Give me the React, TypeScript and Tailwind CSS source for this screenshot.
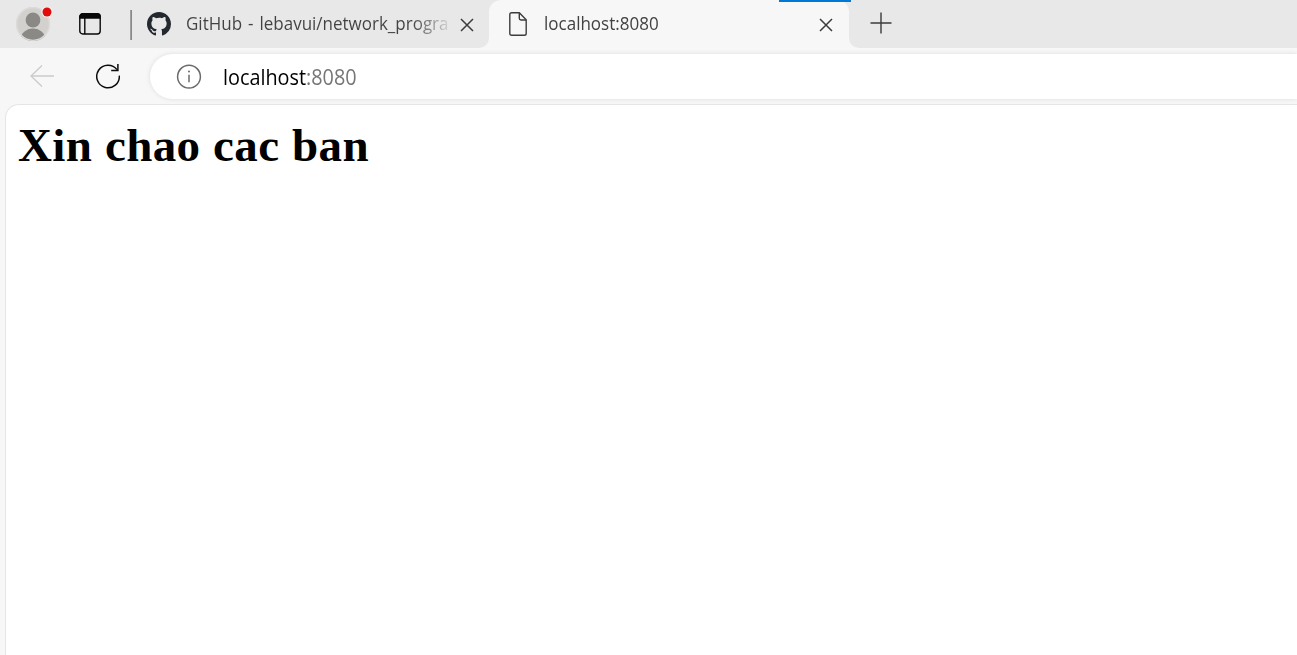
import React from "react";

function CloseIcon() {
  return (
    <svg className="h-[14px] w-[14px] shrink-0" viewBox="0 0 14 14" fill="none" stroke="#3b3b3b" strokeWidth="1.5">
      <path d="M1 1L13 13M13 1L1 13" />
    </svg>
  );
}

function Avatar() {
  return (
    <svg className="ml-4 h-[36px] w-[37px] shrink-0" viewBox="16 6 37 36">
      <defs>
        <clipPath id="avatar">
          <circle cx="33" cy="24" r="17" />
        </clipPath>
      </defs>
      <circle cx="33" cy="24" r="17" fill="#d3d1ce" />
      <g clipPath="url(#avatar)" fill="#8b8986">
        <circle cx="33" cy="20" r="7.4" />
        <ellipse cx="33" cy="40" rx="12.5" ry="11.5" />
      </g>
      <circle cx="33" cy="24" r="16.4" fill="none" stroke="#dddbd9" strokeWidth="1.4" />
      <circle cx="47" cy="12" r="5.6" fill="#f3f3f3" />
      <circle cx="47" cy="12" r="4.5" fill="#e00b0b" />
    </svg>
  );
}

function TabStrip() {
  return (
    <header className="flex h-12 shrink-0">
      <div className="flex w-[489px] shrink-0 items-center rounded-br-[10px] bg-[#e8e8e8]">
        <Avatar />
        <svg className="ml-[26px] h-[22px] w-[22px] shrink-0" viewBox="0 0 22 22" fill="none" stroke="#080808" strokeWidth="1.4">
          <rect x="0.8" y="0.8" width="20.4" height="20.2" rx="3" />
          <path d="M1 5V3.5Q1 1 3.5 1H18.5Q21 1 21 3.5V5Z" fill="#080808" />
          <path d="M5.8 5V21" />
        </svg>
        <div className="ml-[29px] mt-0.5 h-[30px] w-0.5 shrink-0 border-l border-[#a0a0a0] bg-[#888888]" />
        <svg className="ml-[15px] h-[24px] w-[24px] shrink-0" viewBox="0 0 16 16" fill="#24292f">
          <path d="M8 0C3.58 0 0 3.58 0 8c0 3.54 2.29 6.53 5.47 7.59.4.07.55-.17.55-.38 0-.19-.01-.82-.01-1.49-2.01.37-2.53-.49-2.69-.94-.09-.23-.48-.94-.82-1.13-.28-.15-.68-.52-.01-.53.63-.01 1.08.58 1.23.82.72 1.21 1.87.87 2.33.66.07-.52.28-.87.51-1.07-1.78-.2-3.64-.89-3.64-3.95 0-.87.31-1.59.82-2.15-.08-.2-.36-1.02.08-2.12 0 0 .67-.21 2.2.82A7.6 7.6 0 0 1 8 3.86c.68 0 1.36.09 2 .27 1.53-1.04 2.2-.82 2.2-.82.44 1.1.16 1.92.08 2.12.51.56.82 1.27.82 2.15 0 3.07-1.87 3.75-3.65 3.95.29.25.54.73.54 1.48 0 1.07-.01 1.93-.01 2.2 0 .21.15.46.55.38A8.01 8.01 0 0 0 16 8c0-4.42-3.58-8-8-8z" />
        </svg>
        <div className="-mt-0.5 ml-[15px] w-[264px] shrink-0">
          <span className="block w-max origin-left scale-x-[0.924] whitespace-nowrap bg-linear-to-r from-[#424242] from-[86%] to-[#42424220] bg-clip-text font-['Open_Sans',sans-serif] text-[18.4px] leading-[28px] text-transparent [word-spacing:1.7px]">
            GitHub - lebavui/network_progra
          </span>
        </div>
        <div className="ml-2.5 mt-px">
          <CloseIcon />
        </div>
      </div>
      <div className="w-[360px] shrink-0 bg-linear-to-b from-[#e8e8e8] from-50% to-[#f7f7f7] to-50%">
        <div className="relative flex h-12 items-center rounded-t-[12px] bg-[#f7f7f7] pl-5">
          <svg className="h-[24px] w-[18px] shrink-0" viewBox="0 0 18 24" fill="none" stroke="#3d3d3d" strokeWidth="1.4">
            <path d="M2.6.8H10.3L17.2 7.8V21.4Q17.2 23.2 15.4 23.2H2.6Q.8 23.2.8 21.4V2.6Q.8.8 2.6.8Z" />
            <path d="M10.3 1V6.3Q10.3 8 12 8H17" />
          </svg>
          <span className="-mt-0.5 ml-[17px] w-[275px] shrink-0 origin-left scale-x-[0.925] whitespace-nowrap font-['Open_Sans',sans-serif] text-[18.4px] leading-[28px] text-[#424242]">
            localhost:8080
          </span>
          <div className="mt-px">
            <CloseIcon />
          </div>
          <div className="absolute left-[290px] top-0 h-0.5 w-[72px] bg-[#0078d4]" />
        </div>
      </div>
      <div className="flex flex-1 items-center rounded-bl-[10px] bg-[#e8e8e8] pb-0.5 pl-[21px]">
        <svg className="h-[22px] w-[22px]" viewBox="0 0 22 22" stroke="#3b3b3b" strokeWidth="1.4">
          <path d="M.5 11H21.5M11 .5V21.5" />
        </svg>
      </div>
    </header>
  );
}

function Toolbar() {
  return (
    <div className="flex h-[56px] shrink-0 items-center">
      <svg className="ml-[30px] h-[22px] w-[24px] shrink-0" viewBox="0 0 24 22" fill="none" stroke="#cccccc" strokeWidth="1.4">
        <path d="M24 11H1M12 .5L1 11L12 21.5" />
      </svg>
      <svg className="ml-[42px] h-[26px] w-[24px] shrink-0" viewBox="0 0 24 26" fill="none" stroke="#0b0b0b" strokeWidth="1.5">
        <path d="M23.3 12.6A11.3 11.3 0 1 1 21 6.6" />
        <path d="M21.9 1V7.5H15.2" />
      </svg>
      <div className="ml-[30px] mt-px flex h-[45px] flex-1 items-center rounded-l-full bg-white pl-[26px] shadow-[0_0_5px_rgba(0,0,0,0.11)]">
        <svg className="h-[26px] w-[26px] shrink-0" viewBox="0 0 26 26" fill="none" stroke="#6b6b6b" strokeWidth="1.5">
          <circle cx="13" cy="12.7" r="11.4" />
          <path d="M13 10.7V18.2" />
          <circle cx="13" cy="7.5" r="1" fill="#6b6b6b" stroke="none" />
        </svg>
        <span className="ml-[21px] origin-left scale-x-[0.944] whitespace-nowrap font-['Open_Sans',sans-serif] text-[21px] leading-[30px] text-black">
          localhost<span className="text-[#767676]">:8080</span>
        </span>
      </div>
    </div>
  );
}

export default function App() {
  return (
    <div className="flex h-screen flex-col overflow-hidden bg-[#f7f7f7]">
      <TabStrip />
      <Toolbar />
      <main className="ml-[5px] flex-1 rounded-tl-[14px] border-l border-t border-[#e5e5e5] bg-white pl-3 pt-[13px]">
        <h1 className="whitespace-nowrap font-['Liberation_Serif',serif] text-[47px] font-bold leading-[54px] tracking-[0.4px] text-black [word-spacing:0.4px]">
          Xin chao cac ban
        </h1>
      </main>
    </div>
  );
}
